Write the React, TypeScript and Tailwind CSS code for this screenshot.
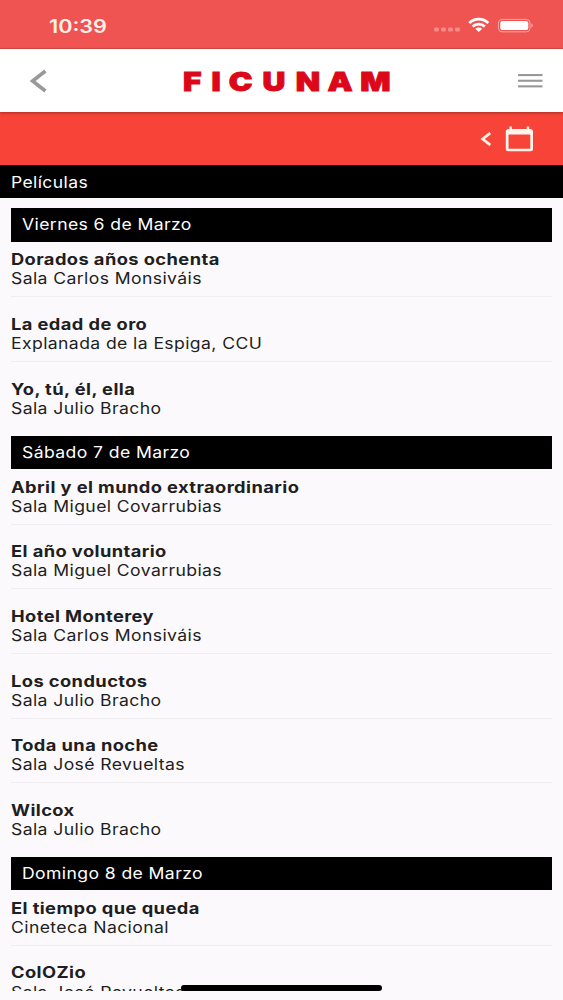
type Film = { title: string; venue: string };
type Day = { label: string; films: Film[] };

const days: Day[] = [
  {
    label: "Viernes 6 de Marzo",
    films: [
      { title: "Dorados años ochenta", venue: "Sala Carlos Monsiváis" },
      { title: "La edad de oro", venue: "Explanada de la Espiga, CCU" },
      { title: "Yo, tú, él, ella", venue: "Sala Julio Bracho" },
    ],
  },
  {
    label: "Sábado 7 de Marzo",
    films: [
      { title: "Abril y el mundo extraordinario", venue: "Sala Miguel Covarrubias" },
      { title: "El año voluntario", venue: "Sala Miguel Covarrubias" },
      { title: "Hotel Monterey", venue: "Sala Carlos Monsiváis" },
      { title: "Los conductos", venue: "Sala Julio Bracho" },
      { title: "Toda una noche", venue: "Sala José Revueltas" },
      { title: "Wilcox", venue: "Sala Julio Bracho" },
    ],
  },
  {
    label: "Domingo 8 de Marzo",
    films: [
      { title: "El tiempo que queda", venue: "Cineteca Nacional" },
      { title: "ColOZio", venue: "Sala José Revueltas" },
    ],
  },
];

function StatusBar() {
  return (
    <div className="flex h-[49px] shrink-0 items-center justify-between border-b border-[#d94a45] bg-[#f05452] pr-[29px] pl-[49px] pt-[4px]">
      <span className="inline-block origin-left scale-x-[1.17] text-[18.5px] leading-none font-semibold text-[#fff0e8]">
        10:39
      </span>
      <svg width="100" height="20" viewBox="0 0 100 20" fill="none">
        <g fill="#f88a87">
          <rect x="0" y="11.5" width="5" height="4" rx="1.5" />
          <rect x="7" y="11.5" width="5" height="4" rx="1.5" />
          <rect x="14" y="11.5" width="5" height="4" rx="1.5" />
          <rect x="21" y="11.5" width="5" height="4" rx="1.5" />
        </g>
        <g stroke="#fff" strokeWidth="2.8">
          <path d="M35.2 7.1C40.5 1.9 49 1.9 54.3 7.1" />
          <path d="M38.6 10.6C42.2 7.2 47.3 7.2 50.9 10.6" />
        </g>
        <path d="M41.3 12.7C43.3 11.1 46.2 11.1 48.2 12.7L44.8 16.1Z" fill="#fff" />
        <rect x="64.5" y="3.4" width="31.5" height="12.4" rx="3.5" stroke="#f9aaa5" />
        <rect x="66.3" y="5.1" width="28" height="9" rx="2" fill="#fff" />
        <path d="M97.3 7.6C99.3 8.4 99.3 10.9 97.3 11.7Z" fill="#f9aaa5" />
      </svg>
    </div>
  );
}

function Header() {
  return (
    <header className="relative z-10 flex h-[63px] shrink-0 items-center justify-between bg-white pr-[20px] pl-[30px] shadow-[0_1px_3px_rgba(0,0,0,0.35)]">
      <svg width="18" height="24" viewBox="0 0 18 24" fill="none" stroke="#999" strokeWidth="3.6">
        <path d="M15.4 2L2.6 12L15.4 22" />
      </svg>
      <svg width="240" height="40" viewBox="0 0 240 40" className="ml-[5px]">
        <g transform="scale(1.22 1)">
          <text
            x="13.9 37.3 51.4 79.1 106.3 132.4 159.2"
            y="29.6"
            fill="#dc0719"
            stroke="#dc0719"
            strokeWidth="0.9"
            className="font-['Inter'] text-[26px] font-black"
          >
            FICUNAM
          </text>
        </g>
      </svg>
      <svg width="25" height="16" viewBox="0 0 25 16" fill="#99979a">
        <rect y="1" width="24.5" height="2.1" />
        <rect y="6.7" width="24.5" height="2.1" />
        <rect y="12.3" width="24.5" height="2.1" />
      </svg>
    </header>
  );
}

function Toolbar() {
  return (
    <div className="flex h-[53px] shrink-0 items-center justify-end gap-[14px] bg-[#f84438] pr-[30px]">
      <svg width="11" height="14" viewBox="0 0 11 14" fill="none" stroke="#fff0e9" strokeWidth="2.7">
        <path d="M10.3 1L2.6 7L10.3 13" />
      </svg>
      <svg width="28" height="26" viewBox="0 0 28 26" fill="#fff5ed">
        <path
          fillRule="evenodd"
          d="M4.4 0.5H6.9V3H21.7V0.5H24.2V3H25.4C27 3 28 4 28 5.3V23C28 24.3 27 25.3 25.4 25.3H3.4C1.8 25.3 0.8 24.3 0.8 23V5.3C0.8 4 1.8 3 3.4 3H4.4ZM3.5 8.5V22.8H25.3V8.5Z"
        />
      </svg>
    </div>
  );
}

function FilmRow({ film, last }: { film: Film; last: boolean }) {
  return (
    <li className="h-[64.67px] pt-[8.6px] text-[15.5px] leading-[19.2px] whitespace-nowrap text-[#201e21]">
      <div className={last ? "h-[47.2px]" : "h-[47.2px] border-b border-[#f0edf1]"}>
        <h3 className="w-fit origin-left scale-x-[1.18] font-bold tracking-[0.35px]">{film.title}</h3>
        <p className="w-fit origin-left scale-x-[1.135] tracking-[0.35px]">{film.venue}</p>
      </div>
    </li>
  );
}

export default function App() {
  return (
    <div className="relative flex h-[1000px] w-full flex-col overflow-hidden bg-[#fcf9fd] font-['Inter',sans-serif]">
      <StatusBar />
      <Header />
      <Toolbar />
      <div className="flex h-[33.4px] shrink-0 items-center bg-black pt-[1px] pl-[11px] text-[15.5px] text-white">
        <h1 className="origin-left scale-x-[1.13] tracking-[0.35px]">Películas</h1>
      </div>
      <main className="h-[792.6px] shrink-0 overflow-hidden px-[11px] pt-[10px]">
        {days.map((day) => (
          <section key={day.label}>
            <div className="flex h-[33.3px] items-center bg-black pl-[11px] text-[15.5px] text-white">
              <h2 className="origin-left scale-x-[1.135] tracking-[0.35px]">{day.label}</h2>
            </div>
            <ul>
              {day.films.map((film, i) => (
                <FilmRow key={film.title} film={film} last={i === day.films.length - 1} />
              ))}
            </ul>
          </section>
        ))}
      </main>
      <div className="absolute top-[985px] left-[181px] h-[6px] w-[201px] rounded-full bg-black" />
    </div>
  );
}
